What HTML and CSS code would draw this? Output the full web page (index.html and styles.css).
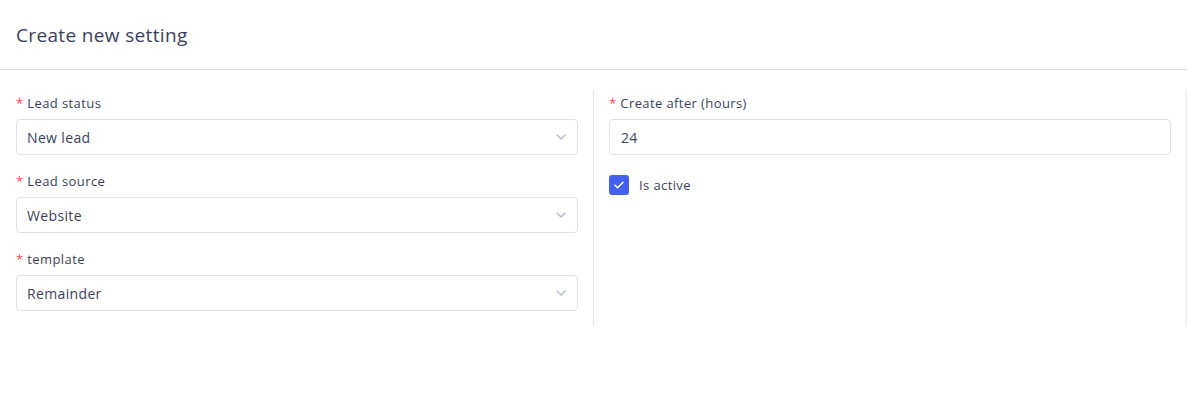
FILE: index.html
```html
<!DOCTYPE html>
<html lang="en">
<head>
    <meta charset="UTF-8">
    <meta name="viewport" content="width=device-width, initial-scale=1.0">
    <title>Create new setting</title>
    <link rel="stylesheet" href="styles.css">
</head>
<body>
    <div class="card-header">
        <h2 class="title">Create new setting</h2>
    </div>
    <div class="card-body">
        <div class="col col-left">
            <div class="form-group">
                <label class="label"><span class="req">*</span> Lead status</label>
                <div class="select">
                    <span>New lead</span>
                    <svg class="chevron" width="10" height="6" viewBox="0 0 10 6"><path d="M1 1l4 4 4-4" fill="none" stroke="#b4bccc" stroke-width="1.4" stroke-linecap="round" stroke-linejoin="round"/></svg>
                </div>
            </div>
            <div class="form-group">
                <label class="label"><span class="req">*</span> Lead source</label>
                <div class="select">
                    <span>Website</span>
                    <svg class="chevron" width="10" height="6" viewBox="0 0 10 6"><path d="M1 1l4 4 4-4" fill="none" stroke="#b4bccc" stroke-width="1.4" stroke-linecap="round" stroke-linejoin="round"/></svg>
                </div>
            </div>
            <div class="form-group">
                <label class="label"><span class="req">*</span> template</label>
                <div class="select">
                    <span>Remainder</span>
                    <svg class="chevron" width="10" height="6" viewBox="0 0 10 6"><path d="M1 1l4 4 4-4" fill="none" stroke="#b4bccc" stroke-width="1.4" stroke-linecap="round" stroke-linejoin="round"/></svg>
                </div>
            </div>
        </div>
        <div class="col col-right">
            <div class="form-group">
                <label class="label"><span class="req">*</span> Create after (hours)</label>
                <div class="input">24</div>
            </div>
            <div class="check-row">
                <span class="checkbox">
                    <svg width="12" height="10" viewBox="0 0 12 10"><path d="M2 5.2l2.6 2.6L10 2.3" fill="none" stroke="#fff" stroke-width="1.6" stroke-linecap="round" stroke-linejoin="round"/></svg>
                </span>
                <span class="check-label">Is active</span>
            </div>
        </div>
    </div>
</body>
</html>
```

FILE: styles.css
```css
body {
    margin: 0;
    font-family: "Open Sans", sans-serif;
    color: #3b3f5c;
    background: #fff;
}
.card-header {
    height: 69px;
    padding: 0 16px;
    display: flex;
    align-items: center;
    border-bottom: 1px solid #e0e0e0;
}
.title {
    margin: 0;
    font-size: 19px;
    font-weight: 400;
    letter-spacing: 0.35px;
    color: #3b3f5c;
}
.card-body {
    display: grid;
    grid-template-columns: 594px 1fr;
    padding-top: 20px;
}
.col {
    border-right: 1px solid #e6e6e6;
    padding: 3px 15px 15px 16px;
}
.col-right {
    padding-left: 15px;
}
.form-group {
    margin-bottom: 16px;
}
.form-group:last-child {
    margin-bottom: 0;
}
.label {
    display: block;
    font-size: 13px;
    line-height: 20px;
    letter-spacing: 0.4px;
    margin-bottom: 6px;
    color: #3b3f5c;
}
.req {
    color: #e7515a;
}
.select, .input {
    height: 36px;
    box-sizing: border-box;
    border: 1px solid #dfe2ea;
    border-radius: 4px;
    padding: 0 10px;
    display: flex;
    align-items: center;
    justify-content: space-between;
    font-size: 14px;
    letter-spacing: 0.35px;
    color: #3b3f5c;
}
.input {
    padding-left: 11px;
}
.chevron {
    margin-right: 1px;
}
.check-row {
    display: flex;
    align-items: center;
    gap: 10px;
    margin-top: 20px;
}
.checkbox {
    width: 20px;
    height: 20px;
    border-radius: 3px;
    background: #4361ee;
    display: flex;
    align-items: center;
    justify-content: center;
}
.check-label {
    font-size: 13px;
    letter-spacing: 0.4px;
    color: #3b3f5c;
}
```
